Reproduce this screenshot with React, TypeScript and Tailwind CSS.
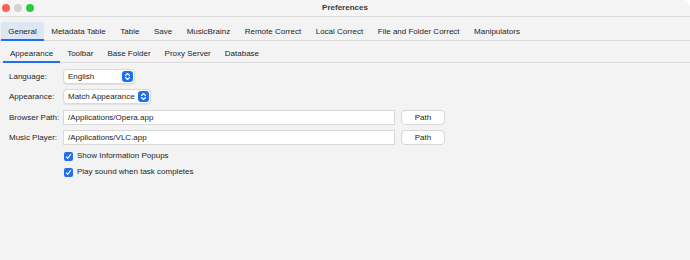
import type { ReactNode } from 'react'

const MAIN_TABS = [
  'General',
  'Metadata Table',
  'Table',
  'Save',
  'MusicBrainz',
  'Remote Correct',
  'Local Correct',
  'File and Folder Correct',
  'Manipulators',
]

const SUB_TABS = ['Appearance', 'Toolbar', 'Base Folder', 'Proxy Server', 'Database']

function Stepper() {
  return (
    <span className="w-[11px] h-[11px] rounded-[3px] bg-[#1f6ff0] flex items-center justify-center">
      <svg width="7" height="9" viewBox="0 0 7 9" fill="none" aria-hidden="true">
        <path d="M1.5 3.5L3.5 1.5L5.5 3.5" stroke="white" strokeWidth="1.1" strokeLinecap="round" strokeLinejoin="round" />
        <path d="M1.5 5.5L3.5 7.5L5.5 5.5" stroke="white" strokeWidth="1.1" strokeLinecap="round" strokeLinejoin="round" />
      </svg>
    </span>
  )
}

function Select({ value, width }: { value: string; width: string }) {
  return (
    <div
      className={`${width} h-[15px] bg-white border border-[#dadada] rounded-[4px] shadow-[0_0.5px_1px_rgba(0,0,0,0.08)] flex items-center justify-between pl-[4px] pr-px`}
    >
      <span>{value}</span>
      <Stepper />
    </div>
  )
}

function Row({ label, children }: { label: string; children: ReactNode }) {
  return (
    <div className="flex items-center h-[15px]">
      <span className="w-[54px] shrink-0">{label}</span>
      {children}
    </div>
  )
}

function PathField({ value }: { value: string }) {
  return (
    <>
      <div className="w-[332px] h-[15px] bg-white border border-[#d8d8d8] flex items-center pl-[4px]">
        {value}
      </div>
      <button className="ml-[6px] w-[44px] h-[15px] bg-white border border-[#d6d6d6] rounded-[4px] flex items-center justify-center">
        Path
      </button>
    </>
  )
}

function Check({ label }: { label: string }) {
  return (
    <div className="flex items-center h-[10px] pl-[55px] gap-[4px]">
      <span className="w-[9px] h-[9px] rounded-[2px] bg-[#1f6ff0] flex items-center justify-center">
        <svg width="7" height="7" viewBox="0 0 7 7" fill="none" aria-hidden="true">
          <path d="M1.3 3.8L2.8 5.4L5.7 1.4" stroke="white" strokeWidth="1.1" strokeLinecap="round" strokeLinejoin="round" />
        </svg>
      </span>
      <span>{label}</span>
    </div>
  )
}

export default function App() {
  return (
    <div className="w-[690px] h-[260px] bg-[#f3f3f3] text-[8px] leading-none text-[#1e1e1e] font-['Liberation_Sans',Arial,sans-serif] rounded-t-[8px] overflow-hidden">
      {/* Title bar */}
      <div className="h-[17px] grid grid-cols-[1fr_auto_1fr] items-center border-b border-[#dcdcdc] bg-[#f5f5f5]">
        <div className="flex items-center gap-[4px] pl-[2px]">
          <span className="w-[8px] h-[8px] rounded-full bg-[#fe5f57]" />
          <span className="w-[8px] h-[8px] rounded-full bg-[#d3d3d3]" />
          <span className="w-[8px] h-[8px] rounded-full bg-[#2ac842]" />
        </div>
        <span className="font-bold text-[#3a3a3a]">Preferences</span>
        <div />
      </div>

      {/* Main tabs */}
      <div className="h-[24px] flex items-end pl-px border-b border-[#dcdcdc]">
        {MAIN_TABS.map((tab, i) => (
          <div
            key={tab}
            className={`h-[19px] px-[7.25px] flex items-center pt-[2px] -mb-px border-b-2 ${
              i === 0 ? 'bg-[#dde7f3] border-[#1f6ff0]' : 'border-transparent'
            }`}
          >
            {tab}
          </div>
        ))}
      </div>

      {/* Sub tabs */}
      <div className="h-[22px] flex items-end pl-[3px] border-b border-[#dcdcdc]">
        {SUB_TABS.map((tab, i) => (
          <div
            key={tab}
            className={`h-[21px] px-[7px] flex items-center pt-[4px] -mb-px border-b-2 ${
              i === 0 ? 'border-[#1f6ff0]' : 'border-transparent'
            }`}
          >
            {tab}
          </div>
        ))}
      </div>

      {/* Form */}
      <div className="pl-[9px] pt-[6px] flex flex-col">
        <Row label="Language:">
          <Select value="English" width="w-[72px]" />
        </Row>
        <div className="mt-[5px]">
          <Row label="Appearance:">
            <Select value="Match Appearance" width="w-[88px]" />
          </Row>
        </div>
        <div className="mt-[6px]">
          <Row label="Browser Path:">
            <PathField value="/Applications/Opera.app" />
          </Row>
        </div>
        <div className="mt-[5px]">
          <Row label="Music Player:">
            <PathField value="/Applications/VLC.app" />
          </Row>
        </div>
        <div className="mt-[6px]">
          <Check label="Show Information Popups" />
        </div>
        <div className="mt-[6px]">
          <Check label="Play sound when task completes" />
        </div>
      </div>
    </div>
  )
}
